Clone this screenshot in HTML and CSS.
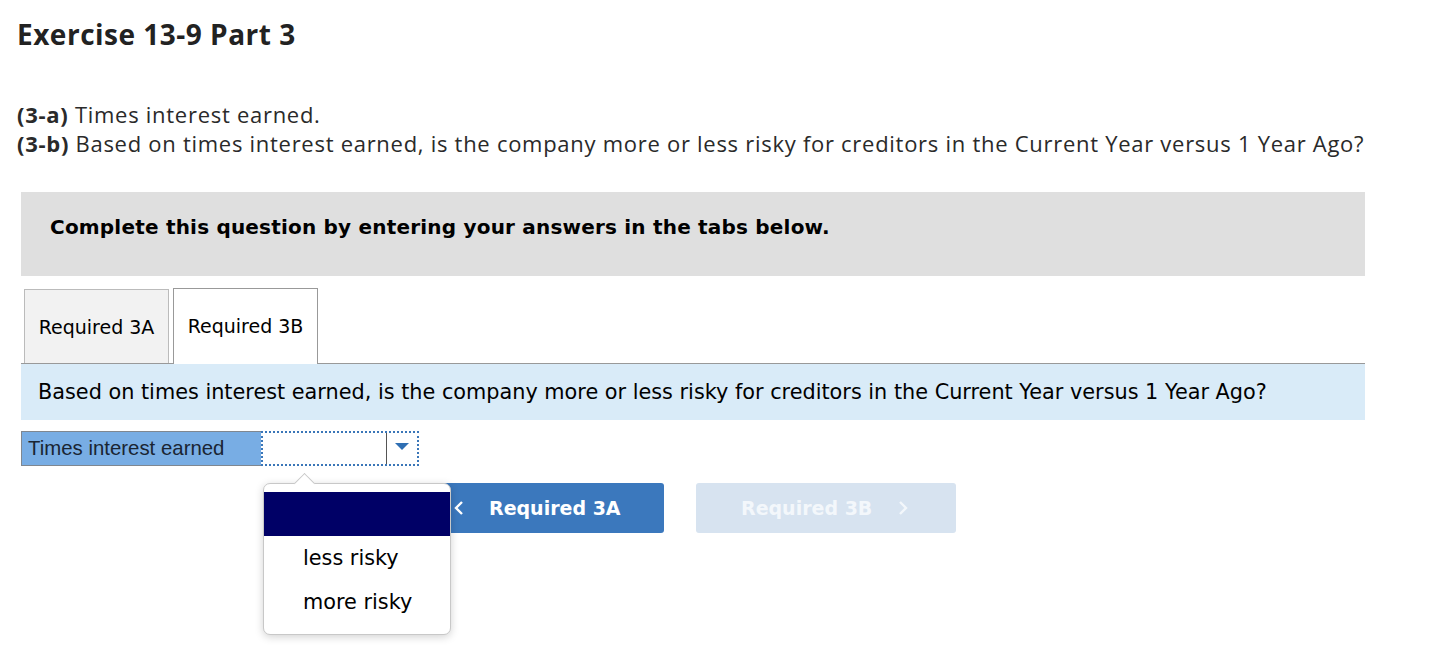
FILE: index.html
```html
<!DOCTYPE html>
<html lang="en">
<head>
<meta charset="utf-8">
<title>Exercise 13-9 Part 3</title>
<link rel="stylesheet" href="styles.css">
</head>
<body>
<main class="page">
  <h1 class="title">Exercise 13-9 Part 3</h1>
  <div class="prompt">
    <p><b>(3-a)</b> Times interest earned.</p>
    <p><b>(3-b)</b> Based on times interest earned, is the company more or less risky for creditors in the Current Year versus 1 Year Ago?</p>
  </div>
  <section class="panel">
    <div class="instructions">Complete this question by entering your answers in the tabs below.</div>
    <div class="tabs">
      <div class="tab">Required 3A</div>
      <div class="tab tab-active">Required 3B</div>
    </div>
    <div class="question">Based on times interest earned, is the company more or less risky for creditors in the Current Year versus 1 Year Ago?</div>
    <div class="answer-row">
      <div class="answer-label">Times interest earned</div>
      <div class="select-wrap">
        <div class="select">
          <span class="select-value"></span>
          <span class="select-sep"></span>
          <span class="select-arrow"></span>
        </div>
        <div class="popup">
          <span class="popup-caret"></span>
          <ul class="options">
            <li class="option option-selected">&nbsp;</li>
            <li class="option">less risky</li>
            <li class="option">more risky</li>
          </ul>
        </div>
      </div>
    </div>
    <div class="nav">
      <button class="nav-btn nav-prev"><svg class="chev" width="10" height="16" viewBox="0 0 10 16"><polyline points="8,2 2,8 8,14" fill="none" stroke="currentColor" stroke-width="2.4"/></svg>Required 3A</button>
      <button class="nav-btn nav-next" disabled>Required 3B<svg class="chev" width="10" height="16" viewBox="0 0 10 16"><polyline points="2,2 8,8 2,14" fill="none" stroke="currentColor" stroke-width="2.4"/></svg></button>
    </div>
  </section>
</main>
</body>
</html>
```
FILE: styles.css
```css
* { box-sizing: border-box; }
html, body { margin: 0; padding: 0; background: #fff; }
body { font-family: "Open Sans", "Lato", sans-serif; color: #222; }

.page { padding: 14px 0 0 17px; width: 1454px; min-height: 658px; }

.title {
  margin: 0;
  font-family: "Open Sans", sans-serif;
  font-weight: 700;
  font-size: 28px;
  letter-spacing: 0.5px;
  line-height: 40px;
  color: #222;
}

.prompt { margin-top: 46px; }
.prompt p {
  margin: 0;
  font-size: 22px;
  letter-spacing: 0.72px;
  line-height: 29px;
  color: #2a2a2a;
}
.prompt b { font-weight: 700; }

.panel { margin: 34px 0 0 4px; width: 1344px; }

.instructions {
  background: #dfdfdf;
  height: 84px;
  padding: 20px 0 0 29px;
  font-family: "DejaVu Sans", Verdana, sans-serif;
  font-weight: 700;
  font-size: 20px;
  letter-spacing: 0.2px;
  line-height: 30px;
  color: #000;
}

.tabs {
  display: flex;
  gap: 4px;
  margin-top: 13px;
  padding-left: 3px;
  border-bottom: 1px solid #999;
  height: 75px;
  align-items: flex-end;
}
.tab {
  width: 145px;
  height: 74px;
  background: #f2f2f2;
  border: 1px solid #bbb;
  border-bottom: none;
  font-family: "DejaVu Sans", Verdana, sans-serif;
  font-size: 19px;
  line-height: 75px;
  text-align: center;
  color: #000;
}
.tab-active {
  background: #fff;
  height: 76px;
  margin-bottom: -1px;
  border-color: #999;
}

.question {
  background: #d9ebf8;
  height: 56px;
  padding-left: 17px;
  font-family: "DejaVu Sans", Verdana, sans-serif;
  font-size: 20.8px;
  line-height: 57px;
  color: #000;
}

.answer-row {
  display: flex;
  margin-top: 11px;
  height: 35px;
}
.answer-label {
  width: 240px;
  height: 35px;
  background: #78ade4;
  border: 1px solid #7f8790;
  border-right: none;
  padding-left: 6px;
  font-family: "Liberation Sans", Arial, sans-serif;
  font-size: 20.4px;
  line-height: 33px;
  color: #1a2533;
}
.select-wrap { position: relative; }
.select {
  display: flex;
  align-items: center;
  width: 158px;
  height: 35px;
  border: 2px dotted #3a76b8;
  background: #fff;
}
.select-value { flex: 1; }
.select-sep {
  width: 1px;
  height: 31px;
  background: #555;
}
.select-arrow {
  width: 0;
  height: 0;
  margin: 0 8px 4px 8px;
  border-left: 7px solid transparent;
  border-right: 7px solid transparent;
  border-top: 7px solid #2f6fb3;
}

.popup {
  position: absolute;
  top: 52px;
  left: 2px;
  width: 188px;
  height: 152px;
  background: #fff;
  border: 1px solid #c8c8c8;
  border-radius: 7px;
  box-shadow: 0 2px 8px rgba(0,0,0,0.18);
  z-index: 5;
}
.popup-caret {
  position: absolute;
  top: -8px;
  left: 33px;
  width: 15px;
  height: 15px;
  background: #fff;
  border-left: 1px solid #c8c8c8;
  border-top: 1px solid #c8c8c8;
  transform: rotate(45deg);
}
.options {
  list-style: none;
  margin: 8px 0 0 0;
  padding: 0;
  position: relative;
}
.option {
  height: 44px;
  padding-left: 39px;
  font-family: "DejaVu Sans", Verdana, sans-serif;
  font-size: 20.8px;
  line-height: 44px;
  color: #000;
}
.option-selected { background: #000066; }

.nav {
  display: flex;
  gap: 32px;
  margin: 17px 0 0 383px;
}
.nav-btn {
  width: 260px;
  height: 50px;
  border: none;
  border-radius: 3px;
  font-family: "DejaVu Sans", Verdana, sans-serif;
  font-weight: 700;
  font-size: 19px;
  color: #fff;
  display: flex;
  align-items: center;
  padding: 0;
}
.nav-prev { background: #3b78bd; padding-left: 50px; }
.nav-prev .chev { margin-right: 25px; }
.nav-next { background: #d7e3f0; color: #f3f7fb; padding-left: 45px; }
.nav-next .chev { margin-left: 26px; }
```
